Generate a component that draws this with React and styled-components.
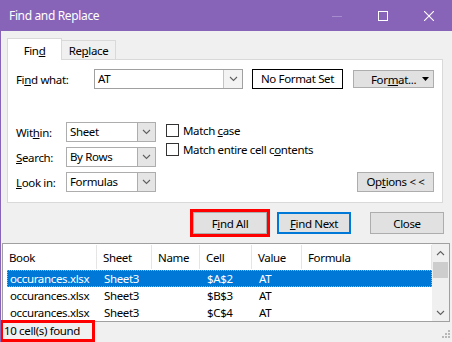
import styled, { createGlobalStyle } from 'styled-components'

const GlobalStyle = createGlobalStyle`
  html, body { margin: 0; padding: 0; background: #f0f0f0; }
  body {
    font-family: 'Segoe UI', 'Noto Sans', sans-serif;
    font-size: 11.5px;
    letter-spacing: -0.35px;
    color: #000;
  }
  u { text-underline-offset: 1px; }
`

const Chevron = ({ up }) => (
  <svg width="9" height="6" viewBox="0 0 9 6">
    <path
      d={up ? 'M1 5 L4.5 1.5 L8 5' : 'M1 1 L4.5 4.5 L8 1'}
      fill="none"
      stroke="#606060"
      strokeWidth="1.1"
    />
  </svg>
)

const columns = ['Book', 'Sheet', 'Name', 'Cell', 'Value', 'Formula']

const rows = [
  { book: 'occurances.xlsx', sheet: 'Sheet3', name: '', cell: '$A$2', value: 'AT', selected: true },
  { book: 'occurances.xlsx', sheet: 'Sheet3', name: '', cell: '$B$3', value: 'AT' },
  { book: 'occurances.xlsx', sheet: 'Sheet3', name: '', cell: '$C$4', value: 'AT' },
]

const App = () => {
  return (
    <>
      <GlobalStyle />
      <Window>
        <TitleBar>
          <Title>Find and Replace</Title>
          <CaptionButton>
            <svg width="10" height="10" viewBox="0 0 10 10">
              <path d="M0 5.5 H10" stroke="#a68ccd" strokeWidth="1" />
            </svg>
          </CaptionButton>
          <CaptionButton>
            <svg width="10" height="10" viewBox="0 0 10 10">
              <rect x="0.5" y="0.5" width="9" height="9" fill="none" stroke="#fff" strokeWidth="1" />
            </svg>
          </CaptionButton>
          <CaptionButton>
            <svg width="10" height="10" viewBox="0 0 10 10">
              <path d="M0 0 L10 10 M10 0 L0 10" stroke="#fff" strokeWidth="1.1" />
            </svg>
          </CaptionButton>
        </TitleBar>

        <Tabs>
          <Tab $active>
            Fin<u>d</u>
          </Tab>
          <Tab>
            Re<u>p</u>lace
          </Tab>
        </Tabs>

        <Panel>
          <FindRow>
            <FindLabel>
              Fi<u>n</u>d what:
            </FindLabel>
            <Combo>
              <ComboText>AT</ComboText>
              <ComboArrow>
                <Chevron />
              </ComboArrow>
            </Combo>
            <NoFormat>No Format Set</NoFormat>
            <FormatButton>
              <span>
                For<u>m</u>at...
              </span>
              <svg width="7" height="4" viewBox="0 0 7 4">
                <path d="M0 0 H7 L3.5 4 Z" fill="#000" />
              </svg>
            </FormatButton>
          </FindRow>

          <Lower>
            <SelectGrid>
              <span>
                Wit<u>h</u>in:
              </span>
              <Select>
                <SelectText>Sheet</SelectText>
                <SelectArrow>
                  <Chevron />
                </SelectArrow>
              </Select>
              <span>
                <u>S</u>earch:
              </span>
              <Select>
                <SelectText>By Rows</SelectText>
                <SelectArrow>
                  <Chevron />
                </SelectArrow>
              </Select>
              <span>
                <u>L</u>ook in:
              </span>
              <Select>
                <SelectText>Formulas</SelectText>
                <SelectArrow>
                  <Chevron />
                </SelectArrow>
              </Select>
            </SelectGrid>

            <CheckList>
              <CheckRow>
                <CheckBox />
                <span>
                  Match <u>c</u>ase
                </span>
              </CheckRow>
              <CheckRow>
                <CheckBox />
                <span>
                  Match entire cell c<u>o</u>ntents
                </span>
              </CheckRow>
            </CheckList>

            <OptionsButton>
              Op<u>t</u>ions &lt; &lt;
            </OptionsButton>
          </Lower>
        </Panel>

        <ButtonRow>
          <Button $marked>
            F<u>i</u>nd All
          </Button>
          <Button $focused $gap={10}>
            <u>F</u>ind Next
          </Button>
          <Button $gap={19}>Close</Button>
        </ButtonRow>

        <Results>
          <Table>
            <Header>
              {columns.map((c) => (
                <HeaderCell key={c}>{c}</HeaderCell>
              ))}
            </Header>
            {rows.map((r, i) => (
              <Row key={i} $selected={r.selected}>
                <BookCell>{r.book}</BookCell>
                <Cell>{r.sheet}</Cell>
                <Cell>{r.name}</Cell>
                <Cell>{r.cell}</Cell>
                <Cell>{r.value}</Cell>
                <Cell />
              </Row>
            ))}
          </Table>
          <ScrollBar>
            <ScrollArrow>
              <Chevron up />
            </ScrollArrow>
            <Thumb />
            <ScrollArrow $bottom>
              <Chevron />
            </ScrollArrow>
          </ScrollBar>
        </Results>

        <StatusBar>
          <StatusLabel>10 cell(s) found</StatusLabel>
          <Grip width="11" height="11" viewBox="0 0 11 11">
            {[
              [9, 1],
              [6, 4],
              [9, 4],
              [3, 7],
              [6, 7],
              [9, 7],
            ].map(([x, y]) => (
              <rect key={`${x}-${y}`} x={x} y={y} width="2" height="2" fill="#b8b8b8" />
            ))}
          </Grip>
        </StatusBar>
      </Window>
    </>
  )
}

export default App

const Window = styled.div`
  width: 452px;
  height: 342px;
  box-sizing: border-box;
  border-left: 1px solid #8764b8;
  display: flex;
  flex-direction: column;
  overflow: hidden;
  background: #f0f0f0;
`

const TitleBar = styled.div`
  height: 31px;
  flex: none;
  display: flex;
  align-items: center;
  background: #8764b8;
  padding-left: 8px;
`

const Title = styled.div`
  flex: 1;
  color: #fff;
  font-size: 12px;
`

const CaptionButton = styled.div`
  width: 46px;
  height: 31px;
  display: flex;
  align-items: center;
  justify-content: center;
`

const Tabs = styled.div`
  display: flex;
  align-items: flex-end;
  height: 22px;
  margin: 7px 0 0 6px;
  position: relative;
  z-index: 1;
`

const Tab = styled.div`
  box-sizing: border-box;
  border: 1px solid #d9d9d9;
  border-bottom: none;
  text-align: center;
  width: 55px;
  height: ${(p) => (p.$active ? '22px' : '19px')};
  margin-bottom: ${(p) => (p.$active ? '0' : '1px')};
  margin-left: ${(p) => (p.$active ? '0' : '-1px')};
  background: ${(p) => (p.$active ? '#fff' : '#f0f0f0')};
  padding-top: ${(p) => (p.$active ? '4px' : '2px')};
  line-height: 15px;
`

const Panel = styled.div`
  box-sizing: border-box;
  width: 436px;
  height: 144px;
  margin: -1px 0 0 6px;
  border: 1px solid #d9d9d9;
  background: #fff;
  padding: 9px 8px 0 8px;
  display: flex;
  flex-direction: column;
`

const FindRow = styled.div`
  display: flex;
  align-items: center;
  height: 20px;
`

const FindLabel = styled.span`
  width: 78px;
`

const Combo = styled.div`
  box-sizing: border-box;
  width: 149px;
  height: 20px;
  border: 1px solid #a0a0a0;
  display: flex;
  background: #fff;
`

const ComboText = styled.span`
  flex: 1;
  padding-left: 3px;
  line-height: 18px;
`

const ComboArrow = styled.span`
  width: 18px;
  border-left: 1px solid #c4c4c4;
  background: #f3f3f3;
  display: flex;
  align-items: center;
  justify-content: center;
`

const NoFormat = styled.div`
  box-sizing: border-box;
  width: 91px;
  height: 20px;
  margin-left: 9px;
  border: 1px solid #000;
  text-align: center;
  line-height: 18px;
`

const FormatButton = styled.div`
  box-sizing: border-box;
  width: 81px;
  height: 18px;
  margin-left: 10px;
  background: #e1e1e1;
  border: 1px solid #adadad;
  display: flex;
  align-items: center;
  justify-content: space-between;
  padding: 0 4px 0 17px;
`

const Lower = styled.div`
  display: flex;
  margin-top: 33px;
`

const SelectGrid = styled.div`
  display: grid;
  grid-template-columns: 50px 90px;
  grid-auto-rows: 20px;
  row-gap: 5px;
  align-items: center;
`

const Select = styled.div`
  box-sizing: border-box;
  height: 20px;
  border: 1px solid #adadad;
  display: flex;
  background: #fff;
`

const SelectText = styled.span`
  flex: 1;
  padding-left: 3px;
  line-height: 18px;
`

const SelectArrow = styled.span`
  width: 17px;
  background: #e5e5e5;
  border-left: 1px solid #adadad;
  display: flex;
  align-items: center;
  justify-content: center;
`

const CheckList = styled.div`
  display: flex;
  flex-direction: column;
  gap: 6px;
  margin-left: 10px;
  padding-top: 2px;
`

const CheckRow = styled.div`
  display: flex;
  align-items: center;
  gap: 4px;
  height: 13px;
`

const CheckBox = styled.span`
  box-sizing: border-box;
  width: 13px;
  height: 13px;
  border: 1px solid #333;
  background: #fff;
`

const OptionsButton = styled.div`
  box-sizing: border-box;
  align-self: flex-end;
  margin-left: auto;
  width: 77px;
  height: 20px;
  background: #e1e1e1;
  border: 1px solid #adadad;
  text-align: center;
  line-height: 18px;
`

const ButtonRow = styled.div`
  display: flex;
  justify-content: flex-end;
  margin-top: 9px;
  padding-right: 8px;
  height: 22px;
`

const Button = styled.div`
  box-sizing: border-box;
  width: 74px;
  height: 22px;
  margin-left: ${(p) => p.$gap || 0}px;
  background: #e1e1e1;
  border: ${(p) => (p.$focused ? '2px solid #0078d7' : '1px solid #adadad')};
  outline: ${(p) => (p.$marked ? '3px solid #ff0000' : 'none')};
  display: flex;
  align-items: center;
  justify-content: center;
`

const Results = styled.div`
  box-sizing: border-box;
  height: 79px;
  margin: 9px 2px 0 1px;
  border: 1px solid #a0a0a0;
  background: #fff;
  display: flex;
`

const Table = styled.div`
  flex: 1;
  display: flex;
  flex-direction: column;
`

const Header = styled.div`
  display: grid;
  grid-template-columns: 94px 55px 48px 52px 50px 1fr;
  height: 26px;
`

const HeaderCell = styled.div`
  display: flex;
  align-items: center;
  padding-left: 6px;
  border-right: 1px solid #e5e5e5;
  margin: 1px 0;
`

const Row = styled.div`
  display: grid;
  grid-template-columns: 90px 55px 48px 52px 50px 1fr;
  height: 17px;
  margin-left: 4px;
  align-items: center;
  background: ${(p) => (p.$selected ? '#0078d7' : 'transparent')};
  color: ${(p) => (p.$selected ? '#fff' : '#000')};
  outline: ${(p) => (p.$selected ? '1px dotted #f2a33a' : 'none')};
  outline-offset: -1px;
`

const BookCell = styled.span`
  padding-left: 3px;
  white-space: nowrap;
`

const Cell = styled.span`
  padding-left: 7px;
  white-space: nowrap;
`

const ScrollBar = styled.div`
  width: 17px;
  background: #f0f0f0;
  display: flex;
  flex-direction: column;
`

const ScrollArrow = styled.div`
  height: 17px;
  display: flex;
  align-items: center;
  justify-content: center;
  margin-top: ${(p) => (p.$bottom ? 'auto' : '0')};
`

const Thumb = styled.div`
  height: 16px;
  margin: 1px 1px 0;
  background: #cdcdcd;
`

const StatusBar = styled.div`
  flex: 1;
  display: flex;
  align-items: flex-start;
  justify-content: space-between;
`

const StatusLabel = styled.div`
  box-sizing: border-box;
  width: 95px;
  height: 22px;
  margin: -2px 0 0 -1px;
  border: 3px solid #ff0000;
  padding-left: 1px;
  line-height: 16px;
  white-space: nowrap;
`

const Grip = styled.svg`
  margin: 7px 2px 0 0;
`
